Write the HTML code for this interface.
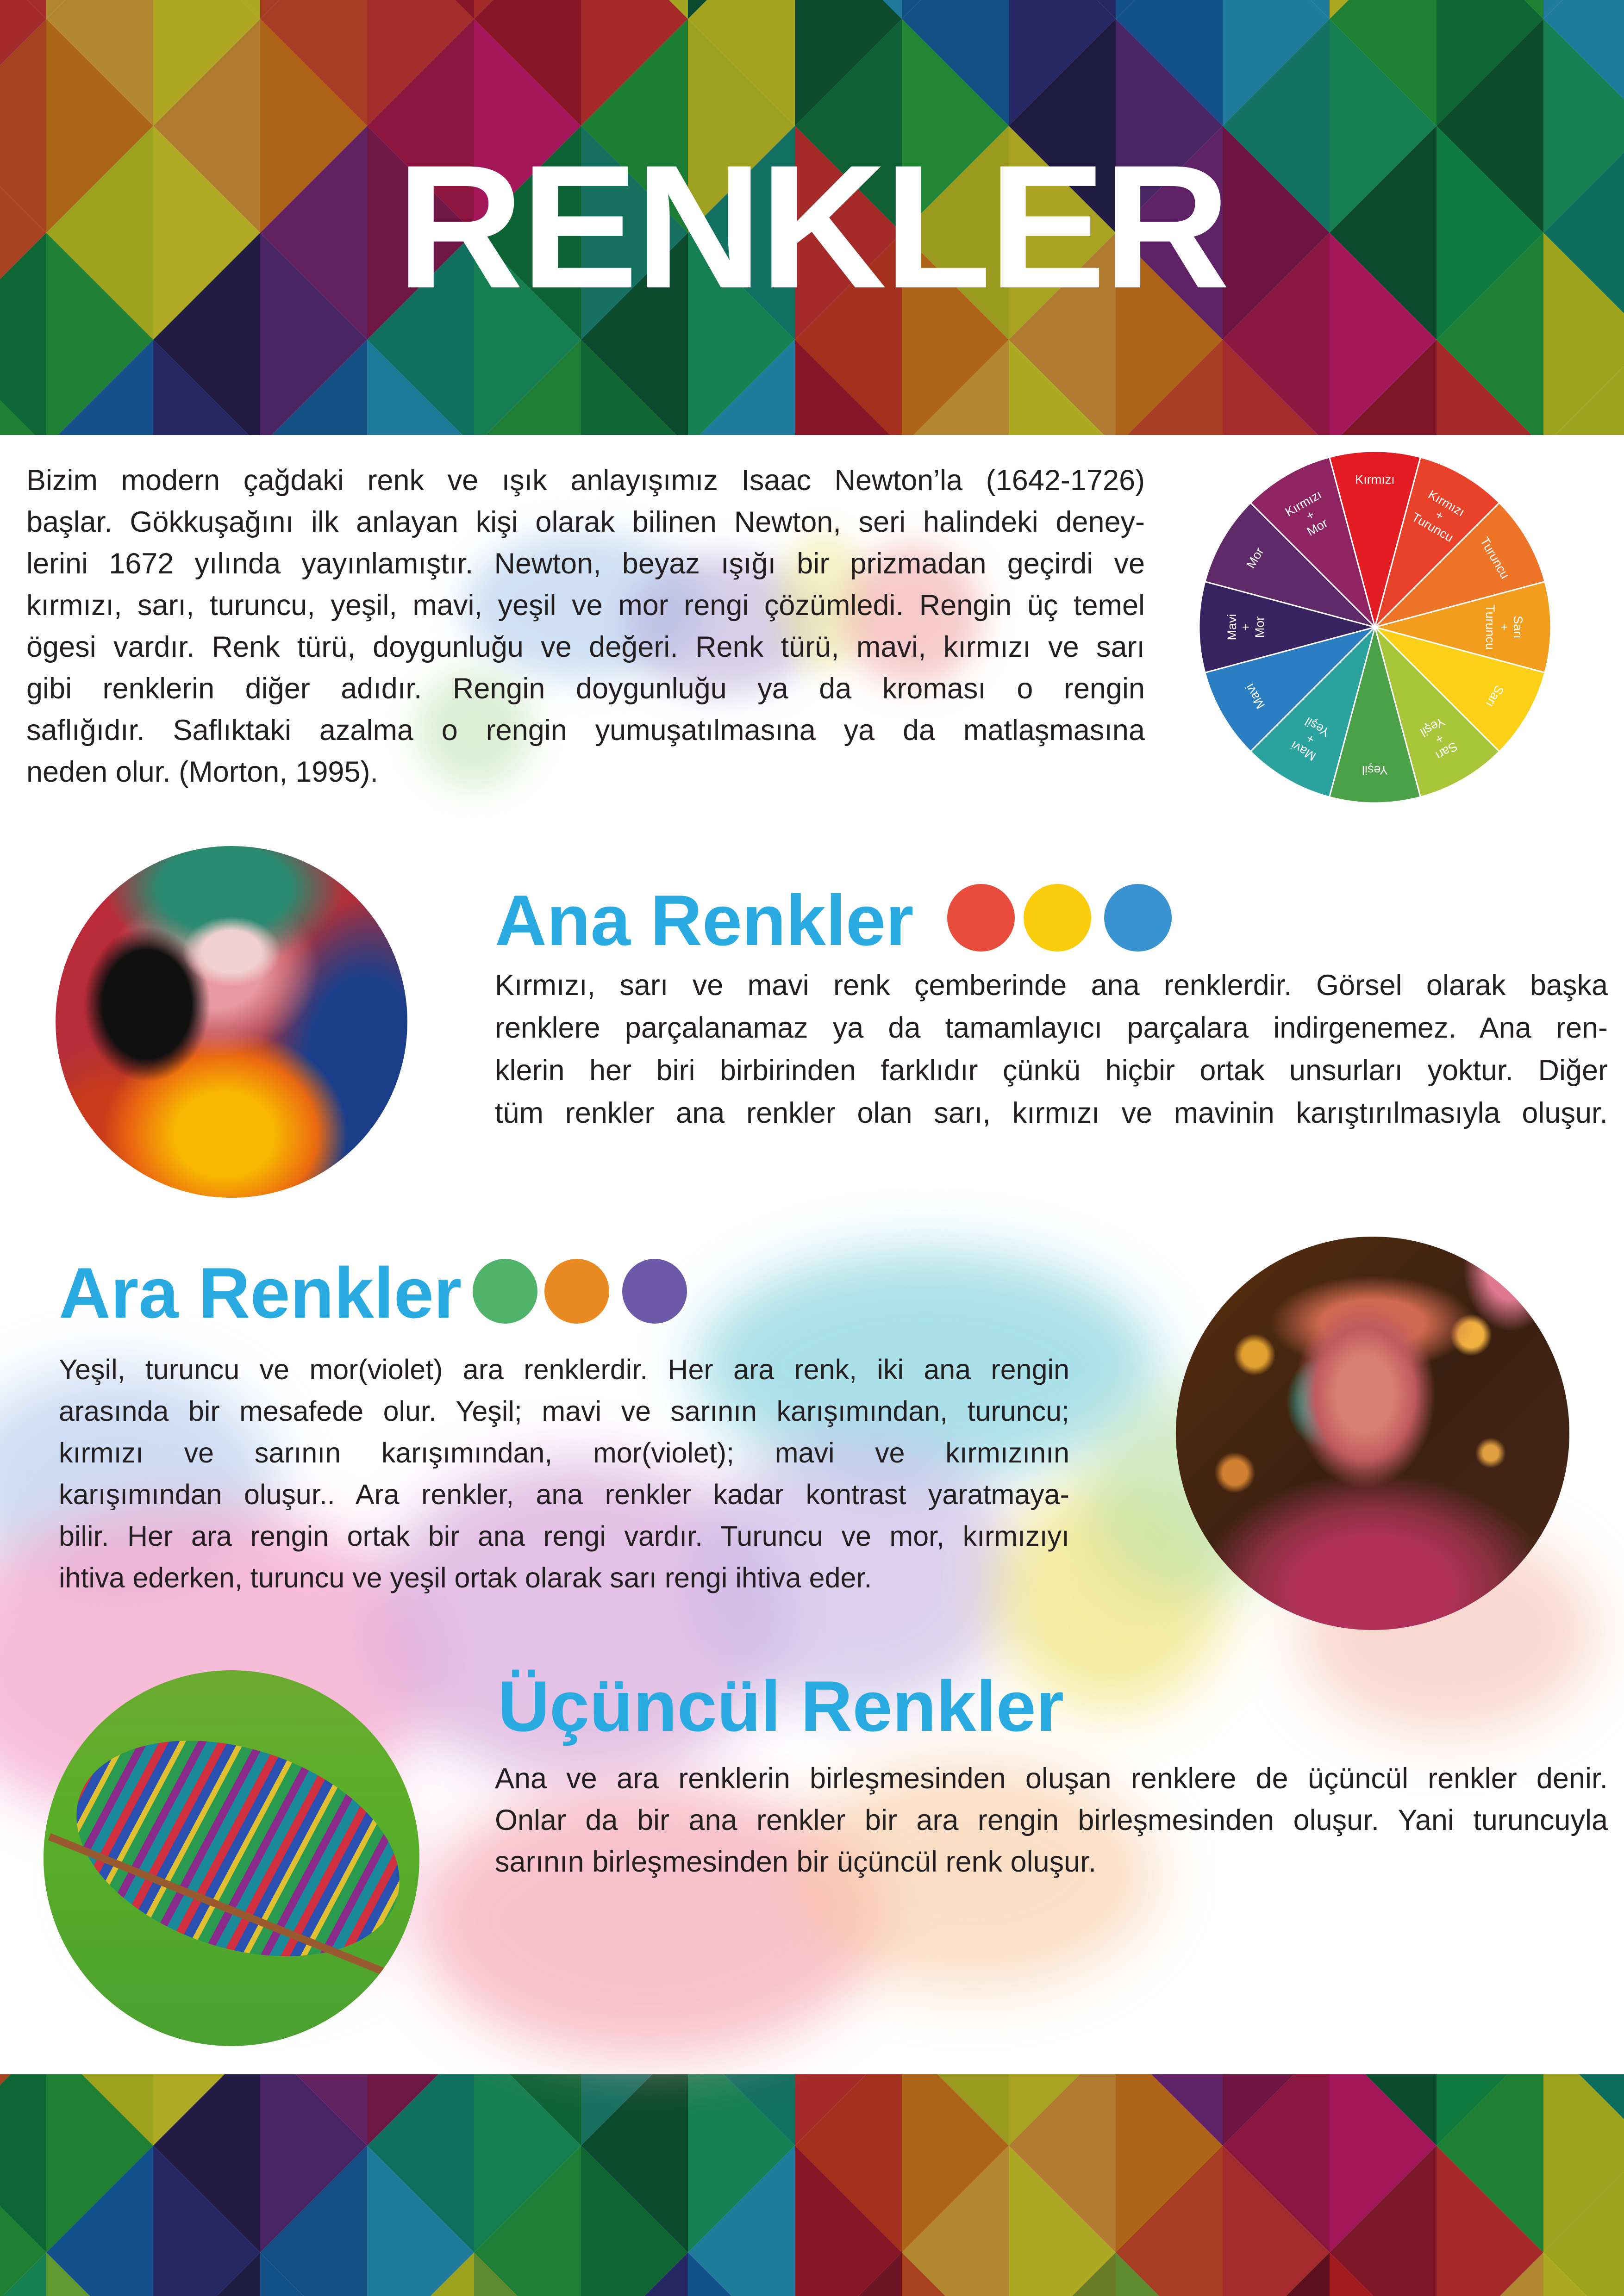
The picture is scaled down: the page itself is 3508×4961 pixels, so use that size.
<!DOCTYPE html>
<html style="width:3508px;height:4961px;overflow:hidden"><head><meta charset="utf-8"><style>
*{margin:0;padding:0;box-sizing:border-box}
body{width:3508px;height:4961px;position:relative;overflow:hidden;background:#fff;font-family:"Liberation Sans",sans-serif;color:#231f20}
.abs{position:absolute}
.p{position:absolute;font-size:63px;line-height:90px}
.p div{text-align:justify;text-align-last:justify;white-space:nowrap}
.p div.l{text-align-last:left}
.h{position:absolute;font-weight:bold;color:#29abe2;font-size:155px;line-height:155px;white-space:nowrap}
.dot{position:absolute;border-radius:50%}
.circ{position:absolute;border-radius:50%;overflow:hidden}
.blur{position:absolute;border-radius:50%;filter:blur(60px)}
#wrap{position:absolute;left:0;top:0;width:3508px;height:4961px;overflow:hidden}
</style></head><body><div id="wrap">

<svg class="abs" style="left:0;top:0" width="3508" height="4961" viewBox="0 0 3508 4961">
<defs>
<path id="L" d="M-231 0L0 -231L0 231Z"/>
<path id="R" d="M0 -231L231 0L0 231Z"/>
<g id="rowsA">
<use href="#L" x="-131" y="503" fill="#a52a2a"/><use href="#R" x="-131" y="503" fill="#a84321"/>
<use href="#L" x="331" y="503" fill="#9ea31f"/><use href="#R" x="331" y="503" fill="#b0a923"/>
<use href="#L" x="793" y="503" fill="#62215f"/><use href="#R" x="793" y="503" fill="#6e1644"/>
<use href="#L" x="1255" y="503" fill="#0d6333"/><use href="#R" x="1255" y="503" fill="#157060"/>
<use href="#L" x="1717" y="503" fill="#127060"/><use href="#R" x="1717" y="503" fill="#a52a2a"/>
<use href="#L" x="2179" y="503" fill="#9b9a20"/><use href="#R" x="2179" y="503" fill="#a9a223"/>
<use href="#L" x="2641" y="503" fill="#5e2165"/><use href="#R" x="2641" y="503" fill="#6d1443"/>
<use href="#L" x="3103" y="503" fill="#0b4a2c"/><use href="#R" x="3103" y="503" fill="#117a3e"/>
<use href="#L" x="3565" y="503" fill="#0d6e5e"/><use href="#R" x="3565" y="503" fill="#0d6e5e"/>
<use href="#L" x="100" y="734" fill="#0d6633"/><use href="#R" x="100" y="734" fill="#208034"/>
<use href="#L" x="562" y="734" fill="#221c45"/><use href="#R" x="562" y="734" fill="#4a2566"/>
<use href="#L" x="1024" y="734" fill="#0f7060"/><use href="#R" x="1024" y="734" fill="#178052"/>
<use href="#L" x="1486" y="734" fill="#0b4a2c"/><use href="#R" x="1486" y="734" fill="#178052"/>
<use href="#L" x="1948" y="734" fill="#a5301e"/><use href="#R" x="1948" y="734" fill="#ad6419"/>
<use href="#L" x="2410" y="734" fill="#b07a30"/><use href="#R" x="2410" y="734" fill="#ad6419"/>
<use href="#L" x="2872" y="734" fill="#8b1640"/><use href="#R" x="2872" y="734" fill="#a4175a"/>
<use href="#L" x="3334" y="734" fill="#1e8034"/><use href="#R" x="3334" y="734" fill="#9ea31f"/>
<use href="#L" x="-131" y="965" fill="#0d6633"/><use href="#R" x="-131" y="965" fill="#1f8034"/>
<use href="#L" x="331" y="965" fill="#16508a"/><use href="#R" x="331" y="965" fill="#262863"/>
<use href="#L" x="793" y="965" fill="#155084"/><use href="#R" x="793" y="965" fill="#1f7a9c"/>
<use href="#L" x="1255" y="965" fill="#1e7e35"/><use href="#R" x="1255" y="965" fill="#0f6633"/>
<use href="#L" x="1717" y="965" fill="#1f7a9c"/><use href="#R" x="1717" y="965" fill="#871626"/>
<use href="#L" x="2179" y="965" fill="#b0862e"/><use href="#R" x="2179" y="965" fill="#aea923"/>
<use href="#L" x="2641" y="965" fill="#a63d22"/><use href="#R" x="2641" y="965" fill="#a52c2c"/>
<use href="#L" x="3103" y="965" fill="#7d1626"/><use href="#R" x="3103" y="965" fill="#a52a2a"/>
<use href="#L" x="3565" y="965" fill="#9ea31f"/><use href="#R" x="3565" y="965" fill="#aea923"/>
<use href="#L" x="100" y="1196" fill="#178052"/><use href="#R" x="100" y="1196" fill="#5e9a30"/>
<use href="#L" x="562" y="1196" fill="#1e1a40"/><use href="#R" x="562" y="1196" fill="#14508a"/>
<use href="#L" x="1024" y="1196" fill="#9ea31f"/><use href="#R" x="1024" y="1196" fill="#5e8a30"/>
<use href="#L" x="1486" y="1196" fill="#262863"/><use href="#R" x="1486" y="1196" fill="#14508a"/>
<use href="#L" x="1948" y="1196" fill="#6e1626"/><use href="#R" x="1948" y="1196" fill="#a84321"/>
<use href="#L" x="2410" y="1196" fill="#6a7a25"/><use href="#R" x="2410" y="1196" fill="#5e8a30"/>
<use href="#L" x="2872" y="1196" fill="#5e1020"/><use href="#R" x="2872" y="1196" fill="#a51c20"/>
<use href="#L" x="3334" y="1196" fill="#b0862e"/><use href="#R" x="3334" y="1196" fill="#aea923"/>
</g>
</defs>
<use href="#L" x="100" y="-190" fill="#a52c2c"/><use href="#R" x="100" y="-190" fill="#b0862e"/>
<use href="#L" x="562" y="-190" fill="#afa922"/><use href="#R" x="562" y="-190" fill="#a63d22"/>
<use href="#L" x="1024" y="-190" fill="#871626"/><use href="#R" x="1024" y="-190" fill="#a52a2a"/>
<use href="#L" x="1486" y="-190" fill="#a5a422"/><use href="#R" x="1486" y="-190" fill="#0b4a2c"/>
<use href="#L" x="1948" y="-190" fill="#1f7a9c"/><use href="#R" x="1948" y="-190" fill="#155084"/>
<use href="#L" x="2410" y="-190" fill="#262863"/><use href="#R" x="2410" y="-190" fill="#14508a"/>
<use href="#L" x="2872" y="-190" fill="#1f7a9c"/><use href="#R" x="2872" y="-190" fill="#afa922"/>
<use href="#L" x="3334" y="-190" fill="#208034"/><use href="#R" x="3334" y="-190" fill="#1f7a9c"/>
<use href="#L" x="-131" y="41" fill="#8a1a2a"/><use href="#R" x="-131" y="41" fill="#a52a2a"/>
<use href="#L" x="331" y="41" fill="#b0862e"/><use href="#R" x="331" y="41" fill="#afa922"/>
<use href="#L" x="793" y="41" fill="#a63d22"/><use href="#R" x="793" y="41" fill="#a52c2c"/>
<use href="#L" x="1255" y="41" fill="#871626"/><use href="#R" x="1255" y="41" fill="#a52a2a"/>
<use href="#L" x="1717" y="41" fill="#a5a422"/><use href="#R" x="1717" y="41" fill="#0b4a2c"/>
<use href="#L" x="2179" y="41" fill="#155084"/><use href="#R" x="2179" y="41" fill="#262863"/>
<use href="#L" x="2641" y="41" fill="#14508a"/><use href="#R" x="2641" y="41" fill="#1f7a9c"/>
<use href="#L" x="3103" y="41" fill="#208034"/><use href="#R" x="3103" y="41" fill="#0f6633"/>
<use href="#L" x="3565" y="41" fill="#1f7a9c"/><use href="#R" x="3565" y="41" fill="#1f7a9c"/>
<use href="#L" x="100" y="272" fill="#a84321"/><use href="#R" x="100" y="272" fill="#ab6518"/>
<use href="#L" x="562" y="272" fill="#b07a30"/><use href="#R" x="562" y="272" fill="#ad6419"/>
<use href="#L" x="1024" y="272" fill="#8e1540"/><use href="#R" x="1024" y="272" fill="#a4175a"/>
<use href="#L" x="1486" y="272" fill="#1e7d35"/><use href="#R" x="1486" y="272" fill="#9da11f"/>
<use href="#L" x="1948" y="272" fill="#0e5f33"/><use href="#R" x="1948" y="272" fill="#208634"/>
<use href="#L" x="2410" y="272" fill="#1e1a40"/><use href="#R" x="2410" y="272" fill="#4a2566"/>
<use href="#L" x="2872" y="272" fill="#157366"/><use href="#R" x="2872" y="272" fill="#178052"/>
<use href="#L" x="3334" y="272" fill="#0b4a2c"/><use href="#R" x="3334" y="272" fill="#178052"/>
<use href="#rowsA"/>
<use href="#rowsA" y="3902"/>
<rect x="0" y="940" width="3508" height="3542" fill="#fff"/>
</svg>

<div class="abs" style="left:0;top:300px;width:3508px;text-align:center;font-weight:bold;font-size:380px;line-height:380px;color:#fff;letter-spacing:-6px">RENKLER</div>

<div class="blur" style="left:1000px;top:1150px;width:520px;height:320px;background:#a8c8ec;opacity:.55;filter:blur(35px)"></div>
<div class="blur" style="left:1350px;top:1200px;width:420px;height:300px;background:#b4a8d8;opacity:.55;filter:blur(35px)"></div>
<div class="blur" style="left:1680px;top:1150px;width:200px;height:300px;background:#e8e890;opacity:.5;filter:blur(30px)"></div>
<div class="blur" style="left:1820px;top:1180px;width:300px;height:300px;background:#f0a0a0;opacity:.55;filter:blur(35px)"></div>
<div class="blur" style="left:900px;top:1450px;width:250px;height:250px;background:#b0dca0;opacity:.45;filter:blur(35px)"></div>

<div class="blur" style="left:1500px;top:2700px;width:1000px;height:500px;background:#8fd6e2;opacity:.75"></div>
<div class="blur" style="left:-100px;top:2950px;width:700px;height:500px;background:#b0c8ee;opacity:.6"></div>
<div class="blur" style="left:-150px;top:3250px;width:1100px;height:700px;background:#f4a6cc;opacity:.75"></div>
<div class="blur" style="left:800px;top:3150px;width:900px;height:700px;background:#d8a8dc;opacity:.7"></div>
<div class="blur" style="left:1500px;top:3100px;width:700px;height:600px;background:#c4b4e4;opacity:.6"></div>
<div class="blur" style="left:2150px;top:3200px;width:500px;height:500px;background:#f2e27a;opacity:.7"></div>
<div class="blur" style="left:2350px;top:3000px;width:450px;height:450px;background:#b4e0a4;opacity:.6"></div>
<div class="blur" style="left:2800px;top:3300px;width:650px;height:450px;background:#f6c0b0;opacity:.6"></div>
<div class="blur" style="left:900px;top:3850px;width:1000px;height:600px;background:#f6a8b8;opacity:.7"></div>
<div class="blur" style="left:1700px;top:3800px;width:800px;height:500px;background:#f8c498;opacity:.55"></div>
<div class="blur" style="left:200px;top:3800px;width:700px;height:500px;background:#f0b0d8;opacity:.5"></div>

<svg class="abs" style="left:2590px;top:975px" width="760" height="760" viewBox="-380 -380 760 760">
<g stroke="#fff" stroke-width="3">
<path d="M0 0L-98.35 -367.05A380 380 0 0 1 98.35 -367.05Z" fill="#e31b23"/>
<path d="M0 0L98.35 -367.05A380 380 0 0 1 268.7 -268.7Z" fill="#e8432a"/>
<path d="M0 0L268.7 -268.7A380 380 0 0 1 367.05 -98.35Z" fill="#ee7428"/>
<path d="M0 0L367.05 -98.35A380 380 0 0 1 367.05 98.35Z" fill="#f39d1f"/>
<path d="M0 0L367.05 98.35A380 380 0 0 1 268.7 268.7Z" fill="#fbd017"/>
<path d="M0 0L268.7 268.7A380 380 0 0 1 98.35 367.05Z" fill="#a9c539"/>
<path d="M0 0L98.35 367.05A380 380 0 0 1 -98.35 367.05Z" fill="#4aa147"/>
<path d="M0 0L-98.35 367.05A380 380 0 0 1 -268.7 268.7Z" fill="#2aa39e"/>
<path d="M0 0L-268.7 268.7A380 380 0 0 1 -367.05 98.35Z" fill="#2a7ec1"/>
<path d="M0 0L-367.05 98.35A380 380 0 0 1 -367.05 -98.35Z" fill="#37235f"/>
<path d="M0 0L-367.05 -98.35A380 380 0 0 1 -268.7 -268.7Z" fill="#5e2a68"/>
<path d="M0 0L-268.7 -268.7A380 380 0 0 1 -98.35 -367.05Z" fill="#8e2461"/>
</g>
<g fill="#fff" font-family="Liberation Sans, sans-serif" font-size="27" text-anchor="middle">
<text transform="rotate(0)" y="-310">Kırmızı</text>
<text transform="rotate(30)" y="-300"><tspan x="0">Kırmızı</tspan><tspan x="0" dy="30">+</tspan><tspan x="0" dy="30">Turuncu</tspan></text>
<text transform="rotate(60)" y="-290">Turuncu</text>
<text transform="rotate(90)" y="-300"><tspan x="0">Sarı</tspan><tspan x="0" dy="30">+</tspan><tspan x="0" dy="30">Turuncu</tspan></text>
<text transform="rotate(120)" y="-290">Sarı</text>
<text transform="rotate(150)" y="-300"><tspan x="0">Sarı</tspan><tspan x="0" dy="30">+</tspan><tspan x="0" dy="30">Yeşil</tspan></text>
<text transform="rotate(180)" y="-300">Yeşil</text>
<text transform="rotate(210)" y="-300"><tspan x="0">Mavi</tspan><tspan x="0" dy="30">+</tspan><tspan x="0" dy="30">Yeşil</tspan></text>
<text transform="rotate(240)" y="-290">Mavi</text>
<text transform="rotate(270)" y="-300"><tspan x="0">Mavi</tspan><tspan x="0" dy="30">+</tspan><tspan x="0" dy="30">Mor</tspan></text>
<text transform="rotate(300)" y="-290">Mor</text>
<text transform="rotate(330)" y="-300"><tspan x="0">Kırmızı</tspan><tspan x="0" dy="30">+</tspan><tspan x="0" dy="30">Mor</tspan></text>
</g>
</svg>

<div class="p" style="left:57px;top:993px;width:2416px">
<div>Bizim modern çağdaki renk ve ışık anlayışımız Isaac Newton’la (1642-1726)</div>
<div>başlar. Gökkuşağını ilk anlayan kişi olarak bilinen Newton, seri halindeki deney-</div>
<div>lerini 1672 yılında yayınlamıştır. Newton, beyaz ışığı bir prizmadan geçirdi ve</div>
<div>kırmızı, sarı, turuncu, yeşil, mavi, yeşil ve mor rengi çözümledi. Rengin üç temel</div>
<div>ögesi vardır. Renk türü, doygunluğu ve değeri. Renk türü, mavi, kırmızı ve sarı</div>
<div>gibi renklerin diğer adıdır. Rengin doygunluğu ya da kroması o rengin</div>
<div>saflığıdır. Saflıktaki azalma o rengin yumuşatılmasına ya da matlaşmasına</div>
<div class="l">neden olur. (Morton, 1995).</div>
</div>

<div class="circ" style="left:120px;top:1828px;width:760px;height:760px;background:
radial-gradient(ellipse 14% 10% at 50% 30%, #f0d0d0 0 60%, transparent 100%),
radial-gradient(ellipse 18% 22% at 26% 45%, #101010 0 70%, transparent 100%),
radial-gradient(ellipse 34% 22% at 48% 12%, #2a8a70 0 55%, transparent 100%),
radial-gradient(ellipse 30% 25% at 45% 35%, #e89aa0 0 45%, transparent 100%),
radial-gradient(ellipse 35% 30% at 48% 82%, #f8b800 0 40%, #ec6a10 75%, transparent 100%),
radial-gradient(ellipse 30% 50% at 88% 65%, #1a3e8a 0 55%, transparent 100%),
radial-gradient(ellipse 25% 30% at 15% 85%, #c83a1a 0 50%, transparent 100%),
linear-gradient(135deg,#c02838,#b0303a 50%,#2a3a7a)"></div>

<div class="h" style="left:1069px;top:1911px">Ana Renkler</div>
<div class="dot" style="left:2046px;top:1910px;width:146px;height:146px;background:#e74c3c"></div>
<div class="dot" style="left:2211px;top:1910px;width:146px;height:146px;background:#f9cd0b"></div>
<div class="dot" style="left:2385px;top:1910px;width:146px;height:146px;background:#3a93d1"></div>
<div class="p" style="left:1069px;top:2083px;width:2404px;line-height:92px">
<div>Kırmızı, sarı ve mavi renk çemberinde ana renklerdir. Görsel olarak başka</div>
<div>renklere parçalanamaz ya da tamamlayıcı parçalara indirgenemez. Ana ren-</div>
<div>klerin her biri birbirinden farklıdır çünkü hiçbir ortak unsurları yoktur. Diğer</div>
<div>tüm renkler ana renkler olan sarı, kırmızı ve mavinin karıştırılmasıyla oluşur.</div>
</div>

<div class="h" style="left:127px;top:2716px">Ara Renkler</div>
<div class="dot" style="left:1021px;top:2720px;width:140px;height:140px;background:#4fb46a"></div>
<div class="dot" style="left:1176px;top:2720px;width:140px;height:140px;background:#e98a23"></div>
<div class="dot" style="left:1344px;top:2720px;width:140px;height:140px;background:#6c5aa8"></div>
<div class="p" style="left:127px;top:2914px;width:2183px;font-size:61px">
<div>Yeşil, turuncu ve mor(violet) ara renklerdir. Her ara renk, iki ana rengin</div>
<div>arasında bir mesafede olur. Yeşil; mavi ve sarının karışımından, turuncu;</div>
<div>kırmızı ve sarının karışımından, mor(violet); mavi ve kırmızının</div>
<div>karışımından oluşur.. Ara renkler, ana renkler kadar kontrast yaratmaya-</div>
<div>bilir. Her ara rengin ortak bir ana rengi vardır. Turuncu ve mor, kırmızıyı</div>
<div class="l">ihtiva ederken, turuncu ve yeşil ortak olarak sarı rengi ihtiva eder.</div>
</div>

<div class="circ" style="left:2540px;top:2672px;width:850px;height:850px;background:
radial-gradient(ellipse 18% 24% at 48% 40%, #d88070 0 40%, #c05a60 70%, transparent 100%),
radial-gradient(ellipse 10% 12% at 38% 42%, #2aa898 0 50%, transparent 100%),
radial-gradient(ellipse 26% 12% at 50% 22%, #d06a50 0 50%, transparent 100%),
radial-gradient(ellipse 45% 30% at 50% 90%, #b0305a 0 45%, #8a3040 70%, transparent 100%),
radial-gradient(ellipse 12% 16% at 85% 8%, #e07890 0 50%, transparent 100%),
radial-gradient(circle at 20% 30%, #e0a030 0 3%, transparent 5%),
radial-gradient(circle at 75% 25%, #f0b040 0 3%, transparent 5%),
radial-gradient(circle at 15% 60%, #d08030 0 3%, transparent 5%),
radial-gradient(circle at 80% 55%, #e0a040 0 2%, transparent 4%),
linear-gradient(135deg,#5a3010,#3a2010 50%,#4a2818)"></div>

<div class="circ" style="left:94px;top:3609px;width:812px;height:812px;background:linear-gradient(180deg,#6aaa30,#5aae28 40%,#4aa030)">
 <div class="abs" style="left:60px;top:170px;width:720px;height:430px;border-radius:50%;transform:rotate(18deg);background:repeating-linear-gradient(100deg,#1a8a9a 0 22px,#d03040 22px 40px,#2a50b0 40px 60px,#e0c030 60px 72px,#2a9a50 72px 95px,#8a2a8a 95px 112px)"></div>
 <div class="abs" style="left:-20px;top:520px;width:900px;height:16px;background:#9a5a30;transform:rotate(22deg)"></div>
</div>

<div class="h" style="left:1075px;top:3609px">Üçüncül Renkler</div>
<div class="p" style="left:1069px;top:3798px;width:2404px">
<div>Ana ve ara renklerin birleşmesinden oluşan renklere de üçüncül renkler denir.</div>
<div>Onlar da bir ana renkler bir ara rengin birleşmesinden oluşur. Yani turuncuyla</div>
<div class="l">sarının birleşmesinden bir üçüncül renk oluşur.</div>
</div>

</div></body></html>
